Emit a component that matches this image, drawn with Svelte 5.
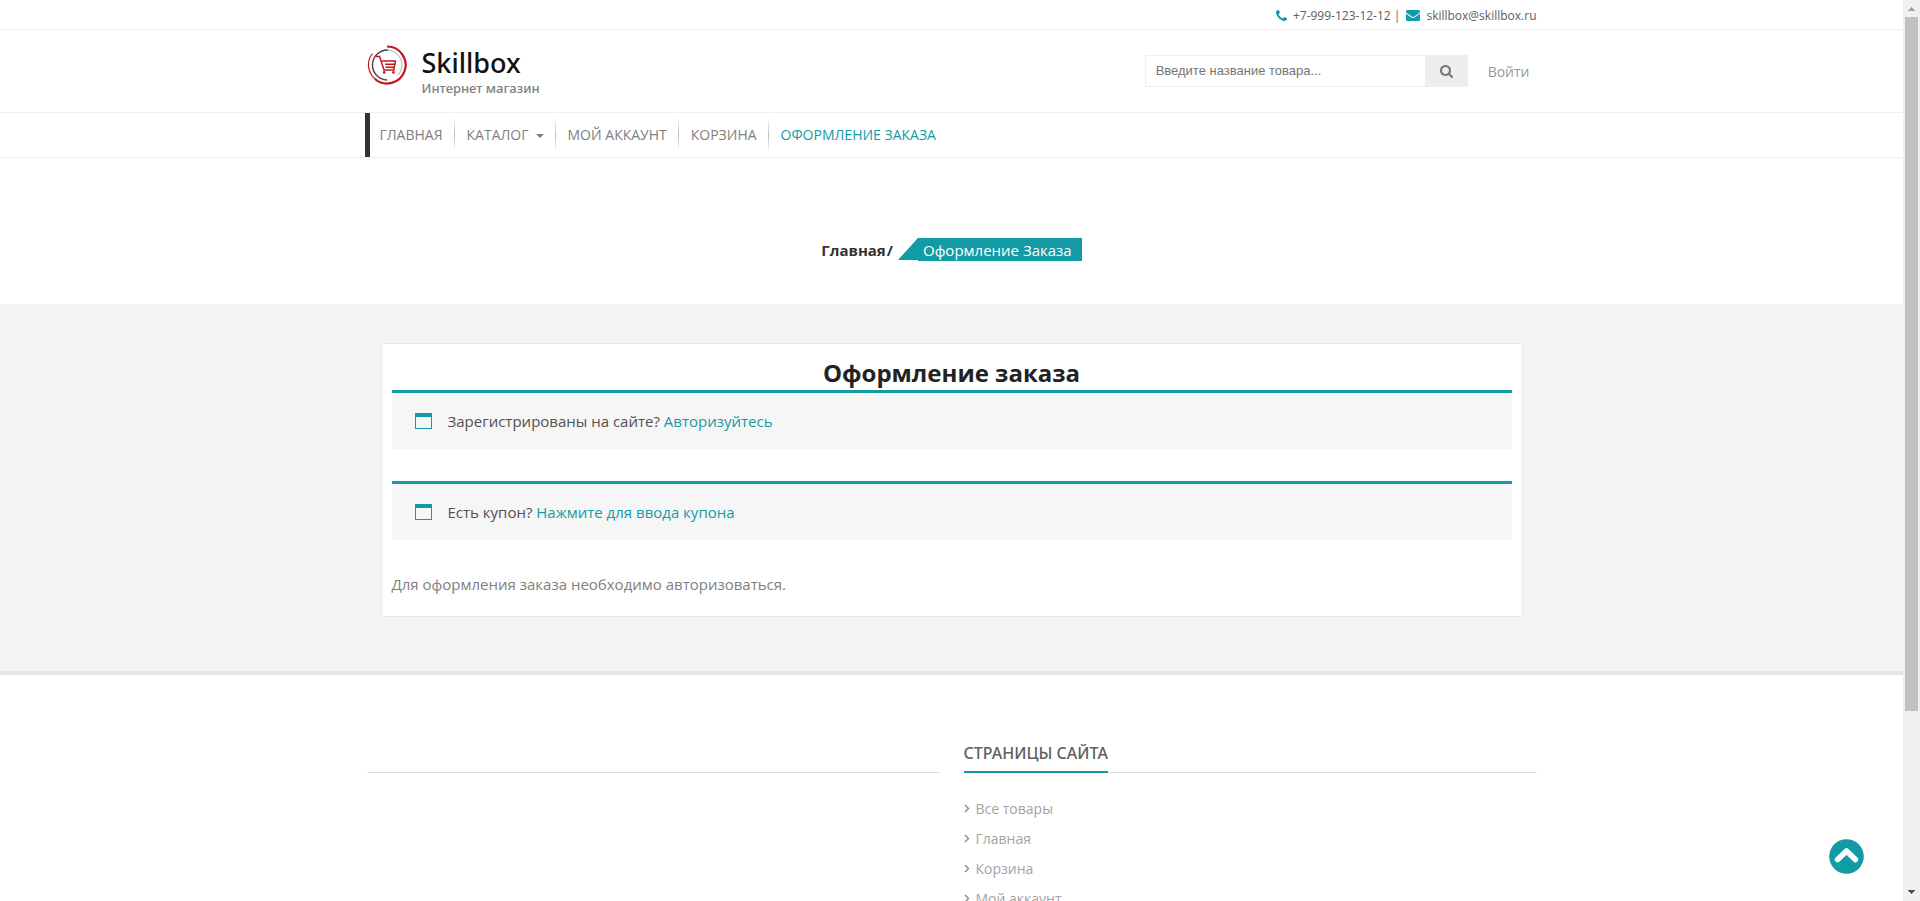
<script>
  const menu = [
    { label: 'Главная' },
    { label: 'Каталог', dropdown: true },
    { label: 'Мой аккаунт' },
    { label: 'Корзина' },
    { label: 'Оформление заказа', active: true }
  ];
  const notices = [
    { text: 'Зарегистрированы на сайте?', link: 'Авторизуйтесь' },
    { text: 'Есть купон?', link: 'Нажмите для ввода купона' }
  ];
  const pages = ['Все товары', 'Главная', 'Корзина', 'Мой аккаунт'];
</script>

<div class="window">
  <div class="page">
    <div class="topbar">
      <div class="container contacts">
        <svg class="phone" viewBox="0 128 1408 1408" aria-hidden="true"><path d="M1408 1240q0 27-10 70.5t-21 68.5q-21 50-122 106-94 51-186 51-27 0-53-3.5t-57.5-12.5-47-14.5-55.5-20.5-49-18q-98-35-175-83-127-79-264-216t-216-264q-48-77-83-175-3-9-18-49t-20.5-55.5-14.5-47-12.5-57.5-3.5-53q0-92 51-186 56-101 106-122 25-11 68.5-21t70.5-10q14 0 21 3 18 6 53 76 11 19 30 54t35 63.5 31 53.5q3 4 17.5 25t21.5 35.5 7 28.5q0 20-28.5 50t-62 55-62 53-28.5 46q0 9 5 22.5t8.5 20.5 14 24 11.5 19q76 137 174 235t235 174q2 1 19 11.5t24 14 20.5 8.5 22.5 5q18 0 46-28.5t53-62 55-62 50-28.5q14 0 28.5 7t35.5 21.5 25 17.5q25 15 53.5 31t63.5 35 54 30q70 35 76 53 3 7 3 21z" /></svg>
        <span>+7-999-123-12-12 |</span>
        <svg class="mail" viewBox="0 256 1792 1408" aria-hidden="true"><path d="M1792 710v794q0 66-47 113t-113 47h-1472q-66 0-113-47t-47-113v-794q44 49 101 87 362 246 497 345 57 42 92.5 65.5t94.5 48 110 24.5h2q51 0 110-24.5t94.5-48 92.5-65.5q170-123 498-345 57-39 100-87zm0-294q0 79-49 151t-122 123q-376 261-468 325-10 7-42.5 31t-54 38.5-52 32.5-57.5 27-50 9h-2q-23 0-50-9t-57.5-27-52-32.5-54-38.5-42.5-31q-91-64-262-182.5t-205-142.5q-62-42-117-115.5t-55-136.5q0-78 41.5-130t118.5-52h1472q65 0 112.5 47t47.5 113z" /></svg>
        <span>skillbox@skillbox.ru</span>
      </div>
    </div>

    <header>
      <div class="container head">
        <a class="brand" href="#home">
          <svg class="logo" viewBox="0 0 40 40" aria-hidden="true" fill="none">
            <path d="M20 1.5A18.5 18.5 0 1 1 8 34" stroke="#c4161c" stroke-width="2.2" />
            <path d="M10 35.4A18.3 18.3 0 0 1 5.5 8.5" stroke="#c4161c" stroke-width="1.2" />
            <path d="M20 35A15 15 0 1 1 21 5" stroke="#444" stroke-width="1.4" />
            <path d="M21 5A15 15 0 0 1 31 30" stroke="#999" stroke-width="0.8" />
            <path d="M9 11.6h3.6l4.4 13.4h10.6" stroke="#c4161c" stroke-width="1.5" />
            <path d="M15 16H29M18 19.2H28M18.6 22.2H27.2M28.6 16l-2 9" stroke="#c4161c" stroke-width="1.5" />
            <circle cx="17.2" cy="27.4" r="1.3" fill="#c4161c" /><circle cx="26.4" cy="27.4" r="1.3" fill="#c4161c" />
          </svg>
          <span class="brand-text">
            <span class="brand-name">Skillbox</span>
            <span class="tagline">Интернет магазин</span>
          </span>
        </a>
        <div class="tools">
          <form class="search">
            <input type="text" aria-label="Поиск товара" placeholder="Введите название товара..." />
            <button type="button" aria-label="Найти">
              <svg viewBox="64 128 1664 1664" aria-hidden="true"><path d="M1216 832q0-185-131.5-316.5t-316.5-131.5-316.5 131.5-131.5 316.5 131.5 316.5 316.5 131.5 316.5-131.5 131.5-316.5zm512 832q0 52-38 90t-90 38q-54 0-90-38l-343-342q-179 124-399 124-143 0-273.5-55.5t-225-150-150-225-55.5-273.5 55.5-273.5 150-225 225-150 273.5-55.5 273.5 55.5 225 150 150 225 55.5 273.5q0 220-124 399l343 343q37 37 37 90z" /></svg>
            </button>
          </form>
          <a class="login" href="#login">Войти</a>
        </div>
      </div>
    </header>

    <nav>
      <div class="container">
        <ul class="menu">
          {#each menu as item}
            <li>
              <a href="#menu" class:active={item.active}>{item.label}{#if item.dropdown}<span class="caret"></span>{/if}</a>
            </li>
          {/each}
        </ul>
      </div>
    </nav>

    <div class="crumbs">
      <a href="#home">Главная</a><span class="slash">/</span><span class="corner"></span><span class="current">Оформление Заказа</span>
    </div>

    <main>
      <div class="container">
        <section class="card">
          <h1>Оформление заказа</h1>
          {#each notices as notice}
            <div class="notice">
              <svg viewBox="0 0 17 16" aria-hidden="true"><path d="M0 0h17v16H0zM1 4v11h15V4z" fill-rule="evenodd" /></svg>
              <p>{notice.text} <a href="#notice">{notice.link}</a></p>
            </div>
          {/each}
          <p class="message">Для оформления заказа необходимо авторизоваться.</p>
        </section>
      </div>
    </main>

    <footer>
      <div class="container columns">
        <div class="heading"></div>
        <div>
          <div class="heading"><h2>Страницы сайта</h2></div>
          <ul class="links">
            {#each pages as page}
              <li>
                <svg viewBox="0 0 6 9" aria-hidden="true"><path d="M1 1l3.5 3.5L1 8" fill="none" stroke="#888" stroke-width="1.4" /></svg>
                <a href="#page">{page}</a>
              </li>
            {/each}
          </ul>
        </div>
      </div>
    </footer>
  </div>

  <button class="to-top" type="button" aria-label="Наверх">
    <svg viewBox="0 0 35 35" aria-hidden="true"><circle cx="17.5" cy="17.5" r="17.3" fill="#139ba5" /><path d="M8.6 20.6l8.9-8.7 8.9 8.7" fill="none" stroke="#fff" stroke-width="5.6" stroke-linecap="round" stroke-linejoin="round" /></svg>
  </button>

  <div class="scrollbar" aria-hidden="true">
    <svg viewBox="0 0 17 17" shape-rendering="crispEdges"><path d="M5 11h7v-1h-1V9h-1V8H9V7H8v1H7v1H6v1H5z" fill="#a3a3a3" /></svg>
    <div class="thumb"></div>
    <svg viewBox="0 0 17 17" shape-rendering="crispEdges"><path d="M5 6h7v1h-1v1h-1v1H9v1H8V9H7V8H6V7H5z" fill="#505050" /></svg>
  </div>
</div>

<style>
  :global(body) {
    overflow: hidden;
  }
  .window {
    --teal: #139ba5;
    display: flex;
    position: relative;
    height: 100vh;
    font-family: "Open Sans", "Noto Sans", sans-serif;
    color: #808080;
    background: #fff;
  }
  .window *,
  .window {
    box-sizing: border-box;
  }
  .page {
    flex: 1;
    min-width: 0;
    overflow-y: auto;
    scrollbar-width: none;
  }
  a {
    color: inherit;
    text-decoration: none;
  }
  ul {
    list-style: none;
    margin: 0;
    padding: 0;
  }
  h1,
  h2,
  p {
    margin: 0;
  }
  svg {
    display: block;
    flex: none;
  }
  .container {
    width: 100%;
    max-width: 1170px;
    margin: 0 auto;
  }
  .topbar {
    border-bottom: 1px solid #eee;
  }
  .contacts {
    display: flex;
    align-items: center;
    justify-content: flex-end;
    gap: 6px;
    height: 29px;
    padding-top: 2px;
    font-size: 12px;
    color: #606060;
  }
  .contacts svg {
    fill: var(--teal);
  }
  .phone {
    width: 11px;
    height: 11px;
  }
  .mail {
    width: 14px;
    height: 11px;
  }
  header {
    border-bottom: 1px solid #eee;
  }
  .head {
    display: flex;
    justify-content: space-between;
    align-items: flex-start;
    padding: 15px 0 14px;
  }
  .brand {
    display: flex;
    gap: 15px;
    font-family: "Noto Sans", "Open Sans", sans-serif;
  }
  .logo {
    width: 40px;
    height: 40px;
  }
  .brand-text {
    display: flex;
    flex-direction: column;
    height: 53px;
  }
  .brand-name {
    font-size: 27px;
    line-height: 35px;
    font-weight: 500;
    color: #111;
  }
  .tagline {
    font-size: 13px;
    line-height: 17px;
    font-weight: 500;
    color: #808080;
  }
  .tools {
    display: flex;
    align-items: center;
    padding: 10px 7px 0 0;
    gap: 20px;
  }
  .search {
    display: flex;
    height: 32px;
  }
  .search input {
    width: 280px;
    padding: 0 10px 2px;
    border: 1px solid #eee;
    border-right: 0;
    border-radius: 0;
    font-family: "Liberation Sans", Arial, sans-serif;
    font-size: 13px;
    color: #757575;
    outline: none;
  }
  .search input::placeholder {
    color: #757575;
  }
  .search button {
    display: grid;
    place-items: center;
    width: 43px;
    padding: 0;
    border: 0;
    background: #eee;
  }
  .search svg {
    width: 13px;
    height: 13px;
    fill: #757575;
  }
  .login {
    font-size: 14px;
    color: #999;
  }
  nav {
    border-bottom: 1px solid #eee;
  }
  .menu {
    display: flex;
    height: 44px;
    margin-left: -2px;
    border-left: 5px solid #333;
  }
  .menu li {
    display: flex;
    align-items: center;
    padding: 0 12px 2px;
    background: linear-gradient(transparent, #bbb, transparent) right center / 1px 34px no-repeat;
  }
  .menu li:first-child {
    padding-left: 10px;
  }
  .menu li:last-child {
    background: none;
  }
  .menu a {
    display: flex;
    align-items: center;
    gap: 7px;
    font-size: 14px;
    text-transform: uppercase;
  }
  .menu a.active {
    color: var(--teal);
  }
  .caret {
    border: 4px solid transparent;
    border-top-color: currentColor;
    border-bottom: 0;
    margin-top: 4px;
  }
  .crumbs {
    display: flex;
    justify-content: center;
    padding: 80px 0 42px;
    font-size: 15px;
    line-height: 23px;
  }
  .crumbs a,
  .slash {
    padding-top: 1px;
    font-weight: 700;
    color: #333;
  }
  .slash {
    padding-left: 1px;
  }
  .corner {
    width: 20px;
    height: 22px;
    margin-left: 5px;
    background: var(--teal);
    clip-path: polygon(100% 0, 100% 100%, 0 100%);
  }
  .current {
    height: 23px;
    padding: 0 10px 0 5px;
    line-height: 25px;
    color: #fff;
    background: var(--teal);
  }
  main {
    padding: 39px 0 54px;
    background: #f4f4f4;
    border-bottom: 4px solid #e6e6e6;
  }
  .card {
    margin: 0 14px;
    padding: 12px 10px 20px;
    background: #fff;
    border: 1px solid #e8e8e8;
  }
  h1 {
    font-size: 24px;
    line-height: 34px;
    font-weight: 700;
    color: #222;
    text-align: center;
  }
  .notice {
    display: flex;
    align-items: center;
    gap: 16px;
    height: 59px;
    margin-bottom: 32px;
    padding: 0 23px;
    color: #515151;
    font-size: 15px;
    background: #f6f6f6;
    border-top: 3px solid var(--teal);
  }
  .notice svg {
    width: 17px;
    height: 16px;
    fill: var(--teal);
  }
  .notice a {
    color: var(--teal);
  }
  .message {
    font-size: 15px;
    line-height: 24px;
  }
  .columns {
    display: grid;
    grid-template-columns: 1fr 1fr;
    gap: 24px;
    padding: 64px 0;
    align-items: start;
  }
  .heading {
    display: flex;
    height: 34px;
    box-shadow: inset 0 -1px #ddd;
  }
  h2 {
    font-family: "Noto Sans", "Open Sans", sans-serif;
    font-size: 16px;
    line-height: 28px;
    font-weight: 500;
    color: #606060;
    text-transform: uppercase;
    border-bottom: 2px solid var(--teal);
  }
  .links {
    padding-top: 20px;
  }
  .links li {
    display: flex;
    align-items: center;
    gap: 6px;
    height: 30px;
    font-size: 14px;
    color: #a3a3a3;
  }
  .links svg {
    width: 6px;
    height: 9px;
  }
  .to-top {
    position: absolute;
    right: 56px;
    bottom: 27px;
    width: 35px;
    height: 35px;
    padding: 0;
    border: 0;
    border-radius: 50%;
    background: none;
  }
  .scrollbar {
    display: flex;
    flex-direction: column;
    width: 17px;
    background: #f0f0f0;
  }
  .scrollbar svg {
    width: 17px;
    height: 17px;
  }
  .thumb {
    height: 77%;
    margin: 0 2px auto;
    background: #c1c1c1;
  }
</style>
